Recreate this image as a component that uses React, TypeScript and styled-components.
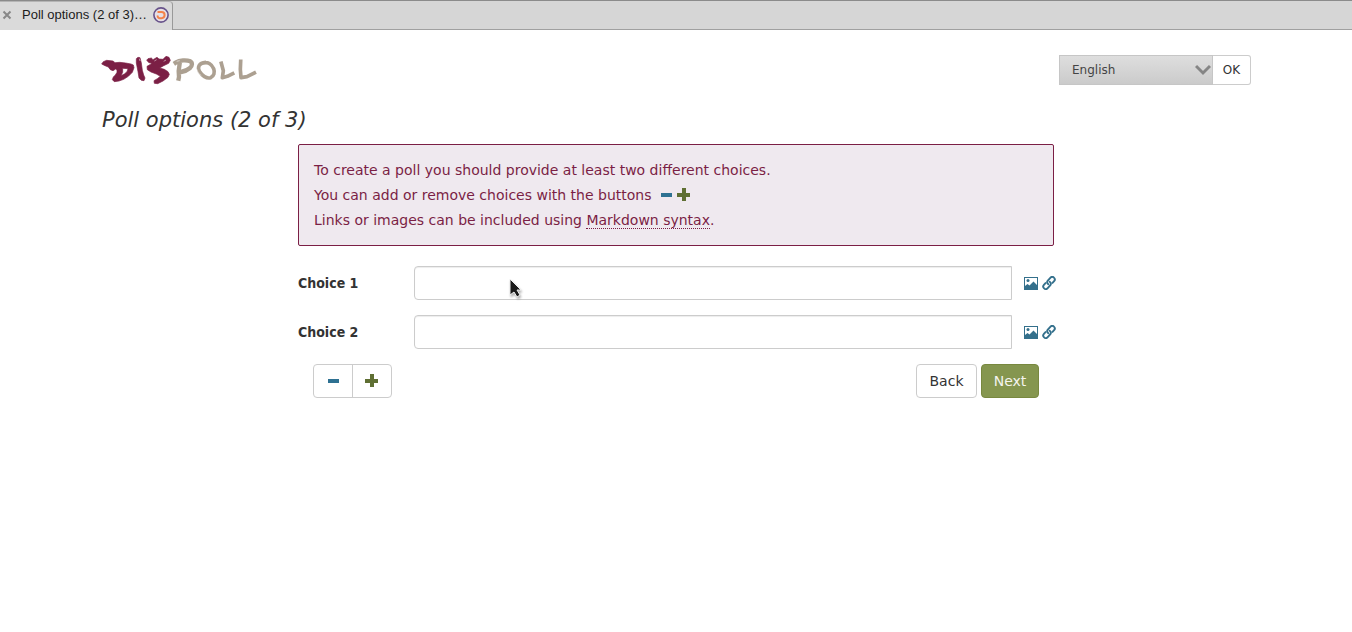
import React from 'react';
import styled, { createGlobalStyle } from 'styled-components';

const GlobalStyle = createGlobalStyle`
  *, *::before, *::after { box-sizing: border-box; }
  body {
    margin: 0;
    background: #fff;
    color: #333;
    font: 14px/20px "DejaVu Sans", sans-serif;
  }
`;

const TabBar = styled.nav`
  display: flex;
  height: 30px;
  background: #d6d6d6;
  border-top: 1px solid #8b8b8b;
  border-bottom: 1px solid #a0a0a0;
`;

const Tab = styled.div`
  display: flex;
  align-items: center;
  height: 29px;
  padding: 0 3px 3px 2px;
  background: #dadada;
  border: 1px solid #999;
  border-width: 1px 1px 0 0;
  border-top-color: #b5b5b5;
  border-radius: 0 4px 0 0;
  font: 13px/20px "Liberation Sans", Arial, sans-serif;
  color: #1c1c1c;
`;

const TabClose = styled.button`
  display: flex;
  padding: 0;
  margin-right: 10px;
  border: 0;
  background: none;
`;

const TabTitle = styled.span`
  margin-right: 6px;
  white-space: nowrap;
`;

const Page = styled.div`
  max-width: 1180px;
  margin: 0 auto;
  padding: 25px 15px;
`;

const Header = styled.header`
  display: flex;
  justify-content: space-between;
  align-items: flex-start;
  height: 53px;
`;

const LanguageForm = styled.form`
  display: flex;
  height: 30px;
`;

const SelectBox = styled.div`
  position: relative;
  display: flex;
`;

const Select = styled.select`
  appearance: none;
  width: 154px;
  height: 30px;
  padding: 0 30px 0 12px;
  border: 1px solid #c6c6c6;
  border-radius: 0;
  background: linear-gradient(#dedede, #cbcbcb);
  color: #444;
  font: 12px/18px "DejaVu Sans", sans-serif;
`;

const Chevron = styled.svg`
  position: absolute;
  top: 9px;
  right: 2px;
  pointer-events: none;
`;

const OkButton = styled.button`
  width: 38px;
  height: 30px;
  padding: 0;
  border: 1px solid #ccc;
  border-left: 0;
  border-radius: 0 3px 3px 0;
  background: #fff;
  color: #333;
  font: 12px/18px "DejaVu Sans", sans-serif;
`;

const Title = styled.h1`
  margin: 0 0 11px;
  padding-left: 1px;
  color: #333;
  font: italic 21px/25px "DejaVu Sans", sans-serif;
`;

const PollForm = styled.form`
  max-width: 756px;
  margin: 0 auto;
`;

const Notice = styled.div`
  margin-bottom: 20px;
  padding: 12px 15px 13px;
  border: 1px solid #7b1f45;
  border-radius: 2px;
  background: #efe9ef;
  color: #7b1f45;
`;

const NoticeLine = styled.p`
  display: flex;
  align-items: center;
  margin: 0;
  height: 25px;
  white-space: pre;
`;

const IconPair = styled.span`
  display: flex;
  align-items: center;
  gap: 5px;
  margin-left: 9px;
`;

const MarkdownLink = styled.a`
  color: inherit;
  text-decoration: none;
  line-height: 16px;
  border-top: 1px solid transparent;
  border-bottom: 1px dotted #7b1f45;
`;

const ChoiceRow = styled.div`
  display: flex;
  align-items: center;
  margin: 0 -2px 15px 0;
`;

const ChoiceLabel = styled.label`
  width: 116px;
  font-family: "DejaVu Sans Condensed", "DejaVu Sans", sans-serif;
  font-weight: 700;
`;

const ChoiceInput = styled.input`
  flex: 1;
  min-width: 0;
  height: 34px;
  padding: 6px 12px;
  border: 1px solid #ccc;
  border-radius: 4px 0 0 4px;
  background: #fff;
  box-shadow: inset 0 1px 1px rgba(0, 0, 0, 0.075);
  font: inherit;
`;

const ChoiceTools = styled.div`
  display: flex;
  gap: 4px;
  margin-left: 12px;
`;

const ToolLink = styled.a`
  display: flex;
`;

const Actions = styled.div`
  display: flex;
  justify-content: space-between;
  padding: 0 15px;
`;

const ButtonGroup = styled.div`
  display: flex;
  gap: 4px;
`;

const StepGroup = styled.div`
  display: flex;
  border: 1px solid #ccc;
  border-radius: 4px;
`;

const StepButton = styled.button`
  display: flex;
  align-items: center;
  justify-content: center;
  width: 38px;
  height: 32px;
  padding: 0 0 1px 1px;
  border: 0;
  background: none;
  & + & {
    width: 39px;
    padding-left: 0;
    padding-right: 1px;
    border-left: 1px solid #ccc;
  }
`;

const Button = styled.button<{ $primary?: boolean }>`
  width: ${p => (p.$primary ? '58px' : '61px')};
  height: 34px;
  padding: 0;
  border: 1px solid ${p => (p.$primary ? '#78883f' : '#ccc')};
  border-radius: 4px;
  background: ${p => (p.$primary ? '#85964f' : '#fff')};
  color: ${p => (p.$primary ? '#f4f4ee' : '#333')};
  font: inherit;
`;

const Cursor = styled.svg`
  position: absolute;
  top: 278px;
  left: 508px;
  pointer-events: none;
  filter: drop-shadow(1px 2px 1px rgba(0, 0, 0, 0.3));
`;

const Minus = () => (
  <svg width="11" height="13" viewBox="0 0 11 13" aria-hidden="true">
    <rect y="5" width="11" height="4" fill="#2e7192" />
  </svg>
);

const Plus = () => (
  <svg width="13" height="13" viewBox="0 0 13 13" aria-hidden="true">
    <path d="M5 0h4v5h4v4H9v4H5V9H0V5h5z" fill="#5f6f33" />
  </svg>
);

const Picture = () => (
  <svg width="14" height="14" viewBox="0 0 14 14" aria-hidden="true">
    <path fillRule="evenodd" fill="#34708c" d="M0 1h14v13H0zM1 2v8l2.500-2 2 1.500 4-4L13 9V2z" />
    <circle cx="4" cy="4.500" r="1.500" fill="#34708c" />
  </svg>
);

const Chain = () => (
  <svg width="14" height="14" viewBox="0 0 14 14" fill="none" stroke="#34708c" strokeWidth="1.900" strokeLinecap="round" aria-hidden="true">
    <path d="M6.300 8.300C4.800 7.200 4.800 5.700 5.800 4.600l2.500-2.800c1-1.100 2.600-1.100 3.600-.2s1.100 2.500.2 3.500L10.500 6.900" />
    <path d="M7.700 5.700c1.500 1.100 1.500 2.600.5 3.700l-2.500 2.800c-1 1.100-2.600 1.100-3.600.2s-1.100-2.500-.2-3.500L3.500 7.100" />
  </svg>
);

const Logo = () => (
  <svg width="158" height="32" viewBox="18 30 474 96" role="img" aria-label="Dispoll">
    <g fill="#7b1f45" stroke="#7b1f45" strokeWidth="2" strokeLinejoin="round">
      <path fillRule="evenodd" d="M20 57L25 50L35 46L54 48L60 53L74 52L92 54L108 57L115 60L117 68L112 82L100 94L86 103L72 108L58 110L52 104L55 96L61 90L66 82L66 75L62 72L54 77L46 74L40 66L30 62ZM83 70L99 71L96 80L88 87L78 92L83 82Z" />
      <path d="M124 41L129 37L135 38L139 54L142 76L146 90L150 99L147 107L139 106L132 99L129 80L124 54Z" />
      <path d="M156 64L165 59L170 54L162 53L155 46L159 41L169 39L174 44L186 37L192 42L204 43L213 34L222 37L226 46L221 55L206 62L194 69L208 73L219 80L223 88L219 97L204 108L188 116L178 115L177 107L187 101L196 94L184 87L168 81L157 74Z" />
    </g>
    <g fill="none" stroke="#aca091" strokeWidth="12" strokeLinecap="square" strokeLinejoin="round">
      <path d="M254 56l-3 22 1 18-1 5M242 53c12-8 32-9 44-4 7 4 6 13-1 20-7 6-16 10-27 12" strokeWidth="13" />
      <path d="M328 53c-16 2-21 13-15 26 8 13 22 23 34 19 10-5 13-16 9-27-6-14-18-21-31-17" strokeWidth="11" />
      <path d="M379 55l6 22-3 21 15-4 16-8" strokeWidth="11" />
      <path d="M437 49l-1 24 2 25 18-3 22-11" strokeWidth="11" />
    </g>
    <g fill="none" stroke="#fff" strokeWidth="1.500">
      <path d="M178 48l7-4M206 49l7-4M133 41l2 7" />
      <path d="M305 72l5 12 9 8M245 49l9-2" />
    </g>
  </svg>
);

export default function App() {
  return (
    <>
      <GlobalStyle />
      <TabBar>
        <Tab>
          <TabClose type="button" aria-label="Close tab">
            <svg width="10" height="10" viewBox="0 0 10 10" stroke="#888" strokeWidth="2">
              <path d="M1.500 1.500l7 7M8.500 1.500l-7 7" />
            </svg>
          </TabClose>
          <TabTitle>Poll options (2 of 3)…</TabTitle>
          <svg width="16" height="16" viewBox="0 0 16 16" fill="none" aria-hidden="true">
            <circle cx="8" cy="8" r="7.100" fill="#e6dfe5" stroke="#67528a" strokeWidth="1.600" />
            <path d="M4.500 5H8.500a3 3 0 0 1 0 6.200H6.500a2 2 0 0 1-1.700-2.700" stroke="#f58249" strokeWidth="2" />
          </svg>
        </Tab>
      </TabBar>
      <Page>
        <Header>
          <Logo />
          <LanguageForm>
            <SelectBox>
              <Select aria-label="Language" defaultValue="English">
                <option>English</option>
              </Select>
              <Chevron width="16" height="12" viewBox="0 0 16 12" fill="none" stroke="#858585" strokeWidth="3">
                <path d="M1 2l7 7 7-7" />
              </Chevron>
            </SelectBox>
            <OkButton type="button">OK</OkButton>
          </LanguageForm>
        </Header>
        <Title>Poll options (2 of 3)</Title>
        <PollForm>
          <Notice>
            <NoticeLine>To create a poll you should provide at least two different choices.</NoticeLine>
            <NoticeLine>
              You can add or remove choices with the buttons
              <IconPair><Minus /><Plus /></IconPair>
            </NoticeLine>
            <NoticeLine>
              {'Links or images can be included using '}
              <MarkdownLink href="#markdown">Markdown syntax</MarkdownLink>.
            </NoticeLine>
          </Notice>
          {[1, 2].map(n => (
            <ChoiceRow key={n}>
              <ChoiceLabel htmlFor={`choice${n}`}>Choice {n}</ChoiceLabel>
              <ChoiceInput id={`choice${n}`} type="text" />
              <ChoiceTools>
                <ToolLink href="#image" aria-label="Add an image"><Picture /></ToolLink>
                <ToolLink href="#link" aria-label="Add a link"><Chain /></ToolLink>
              </ChoiceTools>
            </ChoiceRow>
          ))}
          <Actions>
            <StepGroup>
              <StepButton type="button" aria-label="Remove a choice"><Minus /></StepButton>
              <StepButton type="button" aria-label="Add a choice"><Plus /></StepButton>
            </StepGroup>
            <ButtonGroup>
              <Button type="button">Back</Button>
              <Button type="button" $primary>Next</Button>
            </ButtonGroup>
          </Actions>
        </PollForm>
      </Page>
      <Cursor width="16" height="22" viewBox="0 0 16 22" aria-hidden="true">
        <path d="M2 1v16l4-3 3 5 3-2-3-5h4z" fill="#1a1a1a" stroke="#eee" strokeWidth="1" />
      </Cursor>
    </>
  );
}
